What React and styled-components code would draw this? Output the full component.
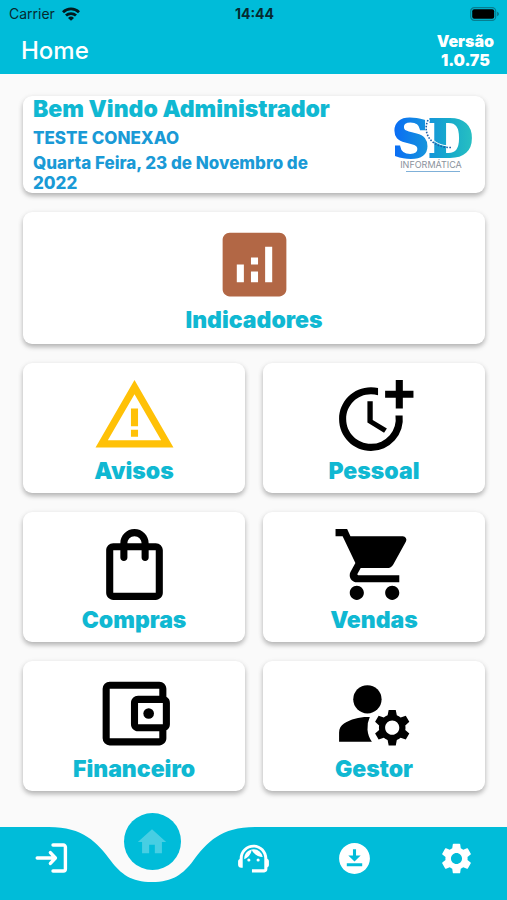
import React from 'react';
import styled, { createGlobalStyle, ThemeProvider } from 'styled-components';
import {
  MdAnalytics,
  MdDownloadForOffline,
  MdHome,
  MdManageAccounts,
  MdMoreTime,
  MdOutlineAccountBalanceWallet,
  MdOutlineShoppingBag,
  MdSettings,
  MdShoppingCart,
  MdSupportAgent,
  MdWarningAmber,
} from 'react-icons/md';

const theme = {
  colors: {
    primary: '#00bcd9',
    title: '#10b8d2',
    info: '#1a9ad6',
    page: '#fafafa',
    warning: '#ffc107',
    brown: '#b26745',
  },
};

const TILES = [
  { label: 'Indicadores', icon: MdAnalytics, color: theme.colors.brown, wide: true },
  { label: 'Avisos', icon: MdWarningAmber, color: theme.colors.warning },
  { label: 'Pessoal', icon: MdMoreTime },
  { label: 'Compras', icon: MdOutlineShoppingBag },
  { label: 'Vendas', icon: MdShoppingCart },
  { label: 'Financeiro', icon: MdOutlineAccountBalanceWallet },
  { label: 'Gestor', icon: MdManageAccounts },
];

const WifiIcon = () => (
  <svg width="18" height="14" viewBox="0 0 18 14" aria-hidden="true">
    <g fill="none" stroke="#021a1e" strokeWidth="2.8">
      <path d="M1 5.2a11.4 11.4 0 0 1 16 0" />
      <path d="M4 8.6a7.2 7.2 0 0 1 10 0" />
    </g>
    <path d="M9 13.8 6 10.9a4.3 4.3 0 0 1 6 0z" fill="#021a1e" />
  </svg>
);

const BatteryIcon = () => (
  <svg width="30" height="14" viewBox="0 0 30 14" aria-hidden="true">
    <rect x="0.7" y="0.7" width="25" height="12.6" rx="3.6" fill="none" stroke="#067e91" strokeWidth="1.2" />
    <rect x="2.2" y="2.2" width="22" height="9.6" rx="2" fill="#000" />
    <path d="M27 4.8c1.3.4 2 1.2 2 2.2s-.7 1.8-2 2.2z" fill="#067e91" />
  </svg>
);

const LoginIcon = () => (
  <svg width="37" height="37" viewBox="0 0 37 37" fill="none" aria-hidden="true">
    <g stroke="#fff" strokeWidth="3.4" strokeLinecap="round" strokeLinejoin="round">
      <path d="M21 5h10.4a2 2 0 0 1 2 2v22a2 2 0 0 1-2 2H21" />
      <path d="M5.2 18H23M18.4 12.6l5 5.4-5 5.4" />
    </g>
  </svg>
);

const Logo = () => (
  <LogoArt width="84" height="58" viewBox="0 0 84 58" role="img" aria-label="SD Informática">
    <defs>
      <linearGradient id="sd" gradientUnits="userSpaceOnUse" x1="2" y1="20" x2="80" y2="20">
        <stop offset="0" stopColor="#0a6cf5" />
        <stop offset="0.4" stopColor="#1592dd" />
        <stop offset="0.7" stopColor="#17aacb" />
        <stop offset="1" stopColor="#27bfc2" />
      </linearGradient>
    </defs>
    <LogoLetters x="0" y="41">S</LogoLetters>
    <LogoLetters x="36" y="41">D</LogoLetters>
    <path d="M37.5 4c-5 12 2 26 21 26" fill="none" stroke="#fff" strokeWidth="1" />
    <path
      d="M36 4c-6 13 3 28 23 27.5"
      fill="none"
      stroke="#1c5fa8"
      strokeWidth="1.6"
      strokeDasharray="1.6 1.4"
    />
    <LogoCaption x="39" y="52">INFORMÁTICA</LogoCaption>
    <path d="M14 55.5h54" stroke="#7fb0d8" strokeWidth="1" />
  </LogoArt>
);

const Tile = ({ icon: Icon, label, color = '#000', wide }) => (
  <TileButton type="button" $wide={wide}>
    <Icon size={85} color={color} aria-hidden="true" />
    <TileLabel>{label}</TileLabel>
  </TileButton>
);

const App = () => {
  return (
    <ThemeProvider theme={theme}>
      <GlobalStyle />
      <Screen>
        <Header>
          <StatusBar>
            <Carrier>
              Carrier <WifiIcon />
            </Carrier>
            <Clock>14:44</Clock>
            <Battery>
              <BatteryIcon />
            </Battery>
          </StatusBar>
          <AppBar>
            <Title>Home</Title>
            <Version>
              Versão
              <br />
              1.0.75
            </Version>
          </AppBar>
        </Header>

        <Main>
          <Welcome>
            <WelcomeText>
              <Greeting>Bem Vindo Administrador</Greeting>
              <Company>TESTE CONEXAO</Company>
              <Today>Quarta Feira, 23 de Novembro de 2022</Today>
            </WelcomeText>
            <Logo />
          </Welcome>
          {TILES.map(tile => (
            <Tile key={tile.label} {...tile} />
          ))}
        </Main>

        <BottomNav>
          <NavLink href="#sair" aria-label="Sair">
            <LoginIcon />
          </NavLink>
          <ActiveItem>
            <Notch viewBox="0 0 206 55" aria-hidden="true">
              <path d="M0 0C34 0 48 15 62 34C72 47 82 55 103 55C124 55 134 47 144 34C158 15 172 0 206 0Z" />
            </Notch>
            <HomeLink href="#home" aria-label="Home">
              <MdHome size={34} />
            </HomeLink>
          </ActiveItem>
          <NavLink href="#suporte" aria-label="Suporte">
            <MdSupportAgent size={37} />
          </NavLink>
          <NavLink href="#baixar" aria-label="Baixar">
            <MdDownloadForOffline size={37} />
          </NavLink>
          <NavLink href="#ajustes" aria-label="Ajustes">
            <MdSettings size={37} />
          </NavLink>
        </BottomNav>
      </Screen>
    </ThemeProvider>
  );
};

const GlobalStyle = createGlobalStyle`
  *, *::before, *::after {
    box-sizing: border-box;
  }

  body {
    margin: 0;
    background: ${p => p.theme.colors.page};
    font-family: Inter, 'Liberation Sans', sans-serif;
  }
`;

const Screen = styled.div`
  display: flex;
  flex-direction: column;
  min-height: 100vh;
`;

const Header = styled.header`
  background: ${p => p.theme.colors.primary};
`;

const StatusBar = styled.div`
  display: grid;
  grid-template-columns: 1fr auto 1fr;
  align-items: center;
  height: 27px;
  padding: 0 7px 0 9px;
  font-size: 14px;
  color: #062a30;
`;

const Carrier = styled.span`
  display: flex;
  align-items: center;
  gap: 7px;
`;

const Clock = styled.span`
  font-weight: 700;
`;

const Battery = styled.span`
  display: flex;
  justify-content: flex-end;
`;

const AppBar = styled.div`
  display: flex;
  align-items: center;
  justify-content: space-between;
  height: 47px;
  padding: 0 13px 0 21px;
  color: #fff;
`;

const Title = styled.h1`
  margin: 0;
  font-size: 24px;
  font-weight: 500;
`;

const Version = styled.p`
  margin: 0;
  font-size: 16px;
  line-height: 19px;
  font-weight: 900;
  text-align: center;
`;

const Main = styled.main`
  flex: 1;
  display: grid;
  grid-template-columns: 1fr 1fr;
  align-content: start;
  gap: 19px 18px;
  padding: 22px 22px 32px 23px;
`;

const Card = styled.section`
  background: #fff;
  border-radius: 9px;
  box-shadow: 0 3px 5px rgba(0, 0, 0, 0.26), 0 1px 6px rgba(0, 0, 0, 0.06);
`;

const Welcome = styled(Card)`
  grid-column: 1 / -1;
  display: flex;
  align-items: center;
  justify-content: space-between;
  padding: 0 9px 0 10px;
`;

const WelcomeText = styled.div`
  flex: 1;
  max-width: 308px;
  color: ${p => p.theme.colors.info};
  font-size: 17px;
  line-height: 20px;
  font-weight: 800;
`;

const Greeting = styled.h2`
  margin: 0;
  font-size: 23px;
  line-height: 27px;
  font-weight: 900;
  white-space: nowrap;
  color: ${p => p.theme.colors.title};
`;

const Company = styled.p`
  margin: 5px 0;
`;

const Today = styled.p`
  margin: 0;
`;

const LogoArt = styled.svg`
  flex: none;
  overflow: visible;
`;

const LogoLetters = styled.text`
  font-family: 'DejaVu Serif', serif;
  font-size: 52px;
  font-weight: 700;
  fill: url(#sd);
  stroke: url(#sd);
  stroke-width: 2px;
`;

const LogoCaption = styled.text`
  font-size: 9px;
  font-weight: 400;
  text-anchor: middle;
  fill: #8a929c;
`;

const TileButton = styled(Card).attrs({ as: 'button' })`
  grid-column: ${p => (p.$wide ? '1 / -1' : 'auto')};
  display: flex;
  flex-direction: column;
  align-items: center;
  height: ${p => (p.$wide ? 132 : 130)}px;
  padding: 10px 0 0;
  border: 0;
  font-family: inherit;
  cursor: pointer;
`;

const TileLabel = styled.span`
  font-size: 23px;
  line-height: 27px;
  font-weight: 900;
  color: ${p => p.theme.colors.title};
`;

const BottomNav = styled.nav`
  display: grid;
  grid-template-columns: repeat(5, 1fr);
  height: 73px;
  background: ${p => p.theme.colors.primary};
`;

const NavLink = styled.a`
  /* keeps the icons above the edges of the notch */
  z-index: 1;
  display: flex;
  align-items: center;
  justify-content: center;
  height: 62px;
  color: #fff;
`;

const ActiveItem = styled.div`
  position: relative;
  display: flex;
  justify-content: center;
  align-items: flex-start;
`;

const Notch = styled.svg`
  position: absolute;
  top: 0;
  left: 50%;
  width: 206px;
  height: 55px;
  margin-left: -103px;
  fill: ${p => p.theme.colors.page};
`;

const HomeLink = styled.a`
  z-index: 1;
  display: flex;
  align-items: center;
  justify-content: center;
  width: 57px;
  height: 57px;
  margin-top: -14px;
  border-radius: 50%;
  background: ${p => p.theme.colors.primary};
  color: rgba(255, 255, 255, 0.28);
`;

export default App;
